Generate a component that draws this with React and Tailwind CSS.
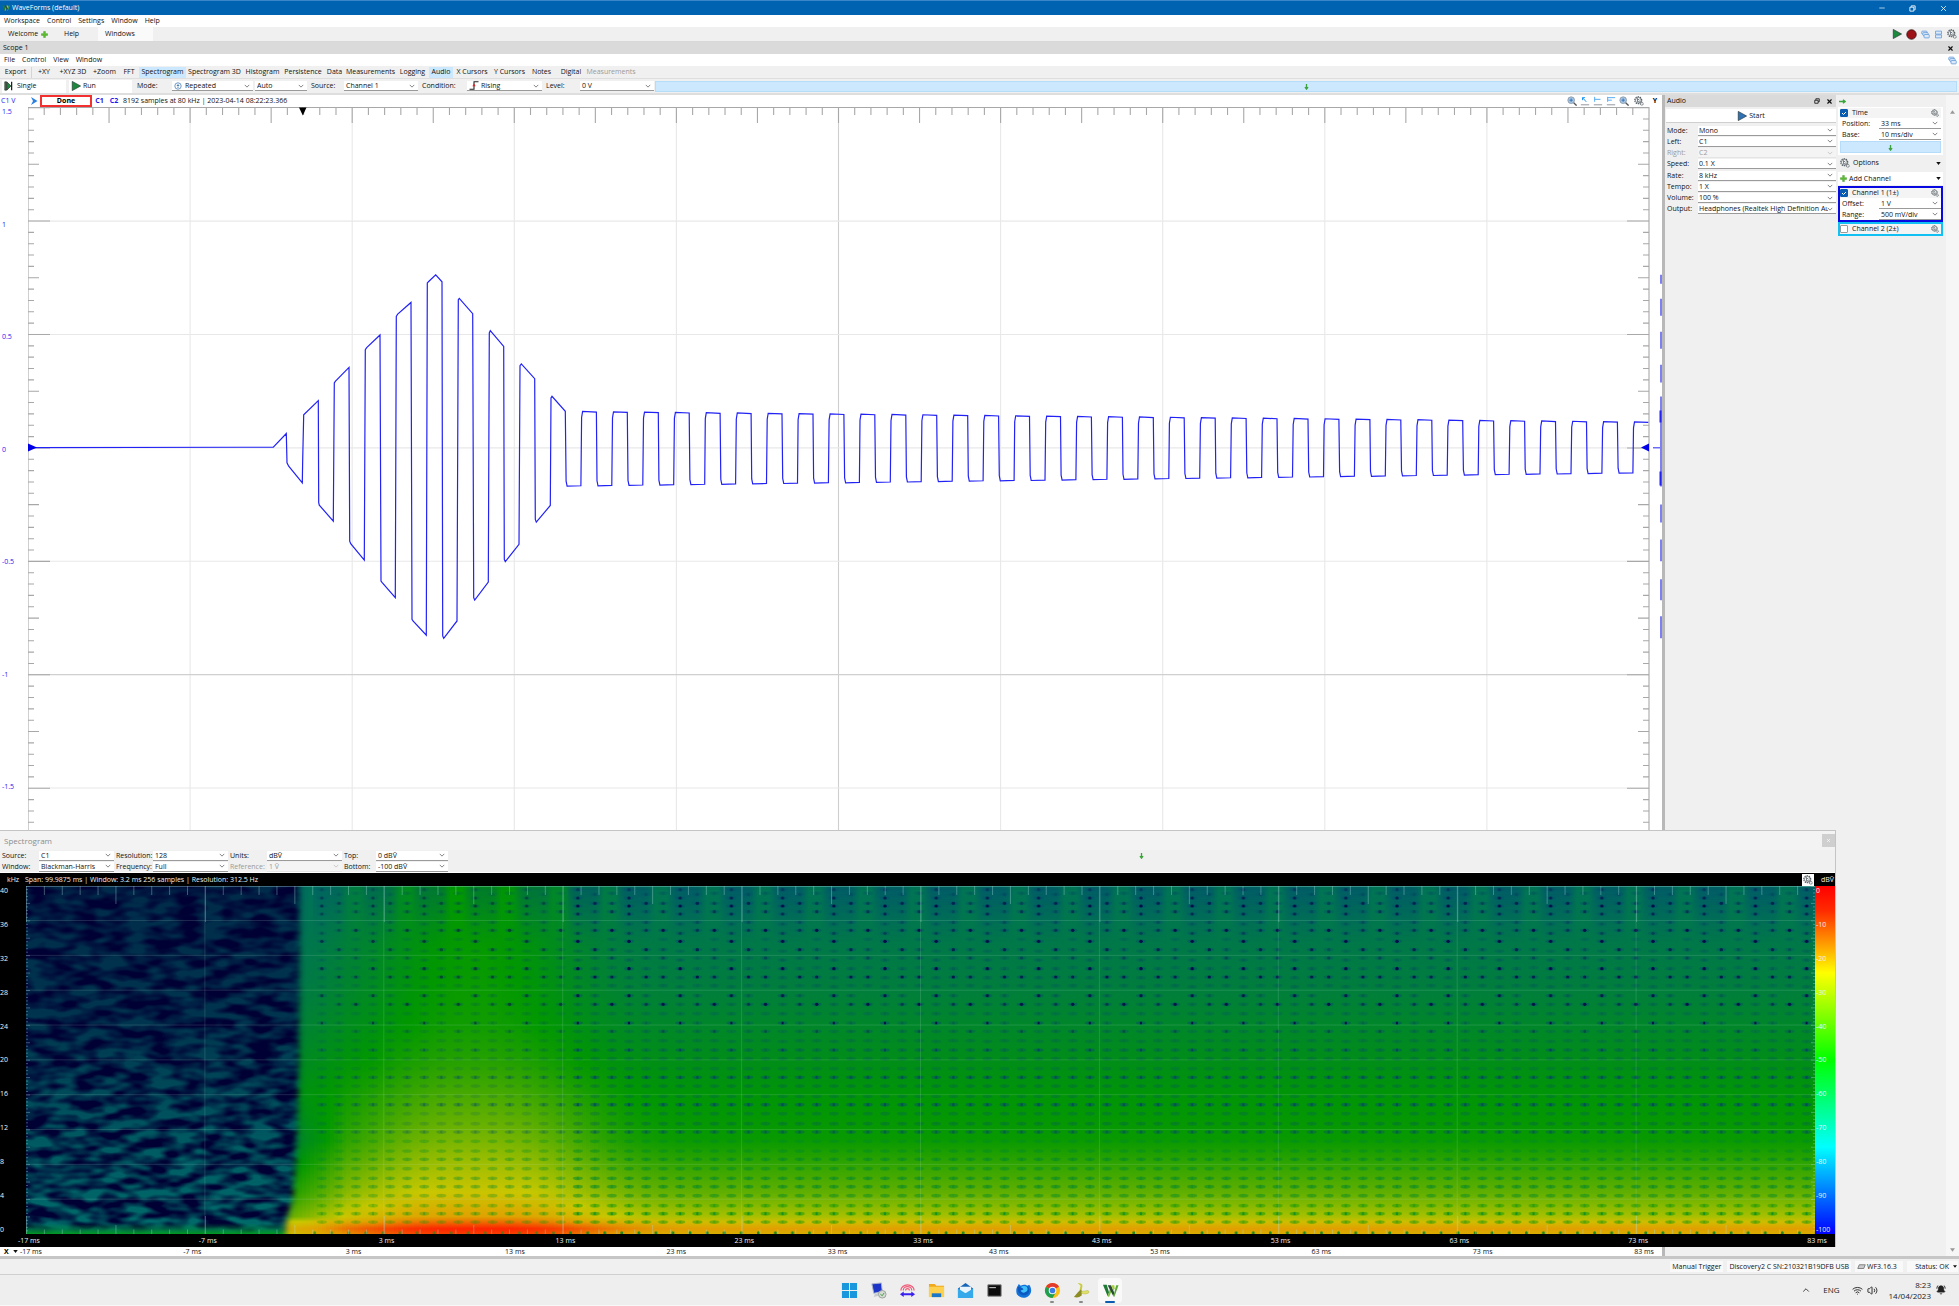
import { useId } from "react";
import { Minus, X, ChevronUp, Wifi, Volume2, BellRing } from "lucide-react";

const waveHead = [
  [0, 563], [100, 563], [139, 522], [141, 610], [146, 620], [187, 670], [188, 600], [191, 466],
  [235, 423], [236, 730], [238, 737], [280, 785], [283, 370], [286, 365], [327, 323], [329, 845],
  [332, 853], [373, 902], [376, 270], [380, 264], [420, 226], [423, 965], [426, 969], [466, 1015],
  [469, 170], [473, 163], [513, 128], [516, 1080], [519, 1085], [559, 1128], [562, 70], [566, 65],
  [587, 45], [606, 66], [608, 1130], [611, 1137], [651, 1085], [655, 120], [658, 116], [698, 162],
  [701, 1015], [704, 1022], [745, 968], [748, 220], [751, 213], [791, 260], [793, 900], [796, 907],
  [837, 855], [840, 318], [844, 313], [884, 357], [886, 780], [889, 788], [931, 738], [933, 415],
  [936, 410], [976, 455],
];

const buildWave = () => {
  const pts = [[28, 448], ...waveHead.map(([x, y]) => [240 + x / 3, 260 + y / 3])];
  for (let k = 0; k < 70; k++) {
    const x = 565.7 + k * 15.47;
    const f = k / 69;
    const low = k % 2 === 0;
    const y = low ? 486.7 - 13.2 * f : 411.7 + 10.6 * f;
    const end = Math.min(x + 15.2, 1649);
    pts.push([x + 0.4, low ? y - 5 : y + 6]);
    pts.push([x + 1.4, y]);
    pts.push([end, low ? y - 0.4 : y + 0.6]);
  }
  return pts.map(([x, y]) => `${x.toFixed(1)},${y.toFixed(1)}`).join(" ");
};

const lerpTable = (xs, ys, x) => {
  if (x <= xs[0]) return ys[0];
  for (let i = 1; i < xs.length; i++) {
    if (x <= xs[i]) {
      const f = (x - xs[i - 1]) / (xs[i] - xs[i - 1]);
      return ys[i - 1] + f * (ys[i] - ys[i - 1]);
    }
  }
  return ys[ys.length - 1];
};

const levelColor = (t) => {
  const stops = [0, 0.15, 0.35, 0.5, 0.75, 0.86, 1];
  const r = lerpTable(stops, [0, 0, 0, 0, 200, 226, 255], t);
  const g = lerpTable(stops, [0, 48, 106, 152, 200, 158, 24], t);
  const b = lerpTable(stops, [51, 80, 106, 0, 0, 0, 0], t);
  return `rgb(${Math.round(r)},${Math.round(g)},${Math.round(b)})`;
};

const depths = [0, 0.27, 0.4, 0.5, 0.6, 0.73, 0.8, 0.88, 0.92, 0.95, 0.965, 0.985, 1];
const steady = [0.38, 0.41, 0.44, 0.465, 0.49, 0.51, 0.56, 0.62, 0.67, 0.71, 0.78, 0.86, 0.82];
const burst = [0.12, 0.1, 0.08, 0.08, 0.1, 0.14, 0.14, 0.14, 0.14, 0.14, 0.13, 0.13, 0.14];

const columnStops = (x) => {
  const edge = Math.max(0, Math.min(1, (345 - x) / 50));
  return depths.map((v, i) => {
    const b = Math.exp(-((Math.abs(x - 473) / (98 + 32 * v)) ** (2 + v)));
    const drop = v > 0.96 ? 0.04 : v > 0.6 ? 0.08 : 0.02;
    return { v, color: levelColor(steady[i] + burst[i] * b - edge * drop) };
  });
};

const strips = Array.from({ length: 108 }, (_, i) => 270 + i * 4);

// [y, strength] of the nulls in each of the three repeating columns
const lowerNulls = [
  [539, 0.25], [569, 0.15], [595, 0.85], [621, 0.25], [652, 0.2], [677, 0.85], [704, 0.2],
  [734, 0.25], [759, 0.65], [787, 0.3], [816, 0.35], [841, 0.6], [869, 0.4], [898, 0.6],
  [923, 0.6], [950, 0.35], [980, 0.6], [1004, 0.8], [1029, 0.5],
];
const nullColumns = [
  { x: 8.5, rows: [[43, 0.3], [73, 0.6], [98, 0.7], [154, 0.95], [181, 0.2], [212, 0.5], [237, 0.6], [266, 0.2], [294, 0.85], [320, 0.25], [376, 0.95], [404, 0.2], [457, 0.6], [485, 0.2], [513, 0.5]] },
  { x: 25.6, rows: [[32, 0.6], [57, 0.85], [81, 1], [105, 0.8], [135, 0.4], [163, 0.6], [187, 1], [216, 0.25], [243, 0.35], [269, 1], [296, 0.3], [323, 0.25], [350, 0.9], [376, 0.3], [404, 0.3], [432, 0.95], [457, 0.2], [487, 0.2], [513, 0.9]] },
  { x: 42.7, rows: [[46, 0.4], [73, 0.85], [98, 0.5], [130, 0.5], [154, 0.7], [212, 0.85], [237, 0.3], [269, 0.35], [294, 0.9], [320, 0.2], [350, 0.4], [376, 0.7], [404, 0.2], [432, 0.4], [457, 0.35], [485, 0.2], [513, 0.5]] },
];

const Gear = ({ size = 10 }) => (
  <svg width={size} height={size} viewBox="0 0 20 20" fill="none" stroke="#4f585d">
    <circle cx="8.500" cy="8.500" r="7" strokeWidth="2.200" strokeDasharray="2.800 1.600" />
    <circle cx="8.500" cy="8.500" r="5.700" strokeWidth="1.300" fill="#f2f4f5" />
    <path d="M7 5v6.500h4.500M7 5.500l4 3" strokeWidth="1.500" />
    <circle cx="15.500" cy="15.500" r="3" strokeWidth="2" strokeDasharray="1.800 1" fill="#e5e8ea" />
  </svg>
);

const Caret = ({ faded }) => (
  <svg
    viewBox="0 0 8 5"
    className="pointer-events-none absolute right-[3px] top-1/2 h-[4px] w-[6px] -translate-y-1/2"
    fill="none"
    stroke={faded ? "#c4c4c4" : "#777"}
  >
    <path d="M1 1l3 3 3-3" strokeWidth="1.2" />
  </svg>
);

const Pick = ({ label, value, className = "", pad = "pl-[2px]", disabled = false, icon = null }) => (
  <div
    className={`relative h-[10px] min-w-0 border-b ${disabled ? "border-[#e4e4e4] bg-[#f4f4f4]" : "border-[#9a9a9a] bg-white"} ${className}`}
  >
    {icon && <span className="pointer-events-none absolute inset-y-0 left-[2px] flex items-center">{icon}</span>}
    <select
      aria-label={label}
      disabled={disabled}
      defaultValue={value}
      className={`block h-[9px] w-full appearance-none bg-transparent pr-2 leading-[9px] ${pad} ${disabled ? "text-[#9a9a9a] opacity-100" : "text-[#111]"}`}
    >
      <option>{value}</option>
    </select>
    <Caret faded={disabled} />
  </div>
);

const PlayIcon = ({ color = "#1c8a3c", size = 10 }) => (
  <svg width={size} height={size} viewBox="0 0 12 12">
    <path d="M1.500 0.500L11.500 6l-10 5.500z" fill={color} stroke="#233" strokeWidth="0.8" />
  </svg>
);

const WindowsIcon = ({ tiled }) => (
  <svg width="9" height="9" viewBox="0 0 12 12" fill="#dce9f8" stroke="#5c97d8" strokeWidth="1">
    {tiled ? (
      <path d="M2 1.5h8v4H2zM2 6.5h8v4H2z" />
    ) : (
      <>
        <rect x="1" y="1.5" width="7" height="4" rx="1" />
        <rect x="2.5" y="3.5" width="7" height="4" rx="1" />
        <rect x="4" y="6" width="7" height="4.500" rx="1" />
      </>
    )}
  </svg>
);

const GreenArrow = ({ right }) => (
  <svg width="7" height="7" viewBox="0 0 8 8" fill="none" stroke="#3ba53b" strokeWidth="1.5">
    {right ? <path d="M0 4h7M4.500 2L7 4 4.500 6" /> : <path d="M4 1v6M2.200 4.800L4 7l1.800-2.200" />}
  </svg>
);

const Plus = () => (
  <svg width="7" height="7" viewBox="0 0 8 8">
    <path d="M3 0.500h2V3h2.500v2H5v2.500H3V5H0.500V3H3z" fill="#5cc02e" stroke="#3f8f22" strokeWidth="0.5" />
  </svg>
);

const WLogo = ({ size }) => (
  <svg width={size} height={size} viewBox="0 0 18 18">
    <path d="M1 3h4l2.500 8L6 15z" fill="#1f7a35" />
    <path d="M6 15L8.500 7l2 2L7.500 16z" fill="#7cc142" />
    <path d="M6 3.500h3.500l3.500 8-1 3.500z" fill="#2a4b38" />
    <path d="M12 15L15 3.500h2.500L13 16z" fill="#59a838" />
    <path d="M10 3.500h3l.5 3.500-1.500 2.500z" fill="#a5cf3d" />
  </svg>
);

const MenuBar = ({ items }) => (
  <nav className="flex h-[12px] items-center gap-[7px] bg-white pl-1">
    {items.map((item) => (
      <button key={item}>{item}</button>
    ))}
  </nav>
);

const views = [
  ["Export", "w-[31px]"],
  ["+XY", "w-[25px] border-l border-[#d5d5d5]"],
  ["+XYZ 3D", "w-[34px]"],
  ["+Zoom", "w-[29px]"],
  ["FFT", "w-[20px]"],
  ["Spectrogram", "w-[47px] bg-[#cce8ff]"],
  ["Spectrogram 3D", "w-[57px]"],
  ["Histogram", "w-[39px]"],
  ["Persistence", "w-[42px]"],
  ["Data", "w-[21px]"],
  ["Measurements", "w-[51px]"],
  ["Logging", "w-[33px]"],
  ["Audio", "w-[24px] bg-[#cce8ff]"],
  ["X Cursors", "w-[38px]"],
  ["Y Cursors", "w-[37px]"],
  ["Notes", "w-[27px]"],
  ["Digital", "w-[32px]"],
  ["Measurements", "w-[48px] text-[#9a9a9a]"],
];

const Toolbar = () => (
  <div className="flex h-[14px] items-center bg-[#f0f0f0] pl-[2px]">
    <button className="flex h-[13px] w-[64px] items-center gap-1 bg-white pl-[2px]">
      <svg width="9" height="10" viewBox="0 0 10 12">
        <path d="M0.500 1h2v10h-2zM3 1l5 5-5 5z" fill="#1c8a3c" stroke="#222" strokeWidth="0.7" />
        <path d="M8 1h1.500v10H8z" fill="#222" />
      </svg>
      Single
    </button>
    <button className="ml-[3px] flex h-[13px] w-[63px] items-center gap-[2px] bg-white pl-[2px]">
      <PlayIcon />
      Run
    </button>
    <span className="w-[40px] pl-[5px]">Mode:</span>
    <Pick
      label="Mode"
      value="Repeated"
      className="w-[81px]"
      pad="pl-[13px]"
      icon={
        <svg width="8" height="8" viewBox="0 0 10 10" fill="none" stroke="#4a7fb5">
          <circle cx="5" cy="5" r="4" />
          <path d="M5 2.500L7 5H3zM5 7.500L3.500 6h3z" fill="#4a7fb5" stroke="none" />
        </svg>
      }
    />
    <Pick label="Auto" value="Auto" className="ml-[2px] w-[52px]" />
    <span className="w-[37px] pl-[4px]">Source:</span>
    <Pick label="Source" value="Channel 1" className="w-[74px]" />
    <span className="w-[49px] pl-[4px]">Condition:</span>
    <Pick
      label="Condition"
      value="Rising"
      className="w-[75px]"
      pad="pl-[14px]"
      icon={
        <svg width="10" height="9" viewBox="0 0 12 11" fill="none">
          <path d="M0.500 10h5.500V1h5.500" stroke="#222" strokeWidth="1.300" />
          <path d="M6 3L4 6.500h4z" fill="#e02020" />
        </svg>
      }
    />
    <span className="w-[38px] pl-[4px]">Level:</span>
    <Pick label="Level" value="0 V" className="w-[74px]" />
    <button
      aria-label="Trigger level"
      className="ml-[1px] mr-[2px] flex h-[11px] flex-1 items-center justify-center border border-[#b5dcf8] bg-[#cce8ff]"
    >
      <GreenArrow />
    </button>
  </div>
);

const hTicks = Array.from({ length: 99 }, (_, i) => i + 1);
const vTicks = Array.from({ length: 64 }, (_, i) => i);

const ScopePlot = () => (
  <svg viewBox="28 107 1634 724" preserveAspectRatio="none" className="h-full min-w-0 flex-1" fill="none">
    <g strokeWidth="1.1">
      {[1, 2, 3, 4, 5, 6, 7, 8, 9].map((i) => (
        <path key={i} d={`M${28 + i * 162.1} 107V831`} stroke={i === 5 ? "#cfcfcf" : "#e8e8e8"} />
      ))}
      {[221.3, 334.8, 448.3, 561.9, 675.4, 789].map((y) => (
        <path key={y} d={`M28 ${y}H1649`} stroke={y === 675.4 ? "#d0d0d0" : "#e8e8e8"} />
      ))}
    </g>
    <g stroke="#a8a8a8" strokeWidth="1.1">
      {hTicks.map((i) => (
        <path key={i} d={`M${28 + i * 16.21} 107v${i % 5 === 0 ? 16 : 8}`} />
      ))}
      {vTicks.map((i) => {
        const y = 107.6 + i * 11.36;
        const len = i % 10 === 0 ? 22 : i % 5 === 0 ? 11 : 6;
        return <path key={i} d={`M28 ${y}h${len}M1649 ${y}h${-len}`} />;
      })}
      <path d="M28 831V107.500H1649V831" />
    </g>
    <path d="M299 107.500h7.500l-3.700 8z" fill="#000" />
    <polyline points={buildWave()} stroke="#2222f4" strokeWidth="1.2" />
    <path d="M28 444l9 4-9 4zM1649 444l-8 4 8 4z" fill="#0000e8" />
    <path d="M1653 448.300h7" stroke="#2222f4" />
    <path
      d="M1661 275v9M1661 299v17M1661 332v17M1661 365v18M1661 397v55M1661 452v35M1661 505v18M1661 540v22M1661 580v21M1661 617v22"
      stroke="#7f7ff5"
      strokeWidth="2"
    />
    <path d="M1660.500 411v12M1660.500 472v14" stroke="#2222f4" strokeWidth="2" />
  </svg>
);

const ScopeTools = () => (
  <div className="ml-auto flex items-center gap-[3px] pr-[3px]">
    {[0, 1, 2, 3, 4].map((i) => (
      <button key={i} aria-label={`View tool ${i + 1}`}>
        <svg width="10" height="10" viewBox="0 0 12 12" fill="none">
          {i === 0 || i === 4 ? (
            <>
              <circle cx="5" cy="5" r="4" fill="#a5c6e8" stroke="#8a97a3" />
              <path d="M8 8l3.500 3.500" stroke="#555" strokeWidth="1.600" />
              <path d="M3 5h4M5 3v4" stroke="#2b6cb0" />
            </>
          ) : (
            <>
              <path d="M1 10.500h10" stroke="#a8adb2" strokeWidth="1.500" />
              {i === 1 && <path d="M7.500 7L3 2M3 5V2h3" stroke="#2196f3" strokeWidth="1.200" />}
              {i === 2 && <path d="M2 1v6M2 4h7" stroke="#58aef5" strokeWidth="1.200" />}
              {i === 3 && <path d="M2 1v6M2 2h9M2 5h5" stroke="#58aef5" strokeWidth="1.200" />}
            </>
          )}
        </svg>
      </button>
    ))}
    <button aria-label="Scope settings" className="ml-[2px]">
      <Gear />
    </button>
    <button className="ml-1 w-[8px] text-center font-bold text-black">Y</button>
  </div>
);

const Scope = () => (
  <section className="flex min-w-0 flex-1 flex-col bg-white">
    <div className="flex h-[12px] items-center">
      <span className="w-[29px] pl-[1px] text-[#2222f4]">C1 V</span>
      <svg width="8" height="8" viewBox="0 0 8 8" className="ml-[1px]">
        <path d="M1 0L7.500 4 1 8 3 4z" fill="#2b7fe0" />
      </svg>
      <span className="ml-[2px] flex h-[12px] w-[52px] items-center justify-center border-2 border-[#f23030] font-bold text-black">
        Done
      </span>
      <button className="w-[15px] text-center font-bold text-[#1a1aee]">C1</button>
      <button className="w-[14px] text-center font-bold text-[#1a1aee]">C2</button>
      <span className="pl-[2px]">8192 samples at 80 kHz | 2023-04-14 08:22:23.366</span>
      <ScopeTools />
    </div>
    <div className="flex min-h-0 flex-1">
      <div className="grid w-[28px] grid-rows-[1127fr_1127fr_1127fr_1127fr_1127fr_1127fr_478fr] pl-[2px] text-[#2222f4]">
        {["1.5", "1", "0.5", "0", "-0.5", "-1", "-1.5"].map((v) => (
          <span key={v} className="leading-[10px]">{v}</span>
        ))}
      </div>
      <ScopePlot />
    </div>
  </section>
);

const audioRows = [
  ["Mode:", "Mono"],
  ["Left:", "C1"],
  ["Right:", "C2"],
  ["Speed:", "0.1 X"],
  ["Rate:", "8 kHz"],
  ["Tempo:", "1 X"],
  ["Volume:", "100 %"],
  ["Output:", "Headphones (Realtek High Definition Au"],
];

const AudioPanel = () => (
  <section className="w-[171px] bg-[#f0f0f0]">
    <header className="flex h-[12px] items-center bg-[#dadada] pl-[2px] pr-[3px]">
      <span className="flex-1">Audio</span>
      <button aria-label="Undock">
        <svg width="6" height="6" viewBox="0 0 8 8" fill="none" stroke="#222" strokeWidth="1.200">
          <path d="M2.500 3V1H7v4H5.500M1 3h4.500v4H1z" />
        </svg>
      </button>
      <button aria-label="Close audio" className="ml-[6px]">
        <X size={7} strokeWidth={4} />
      </button>
    </header>
    <button className="mx-[1px] mt-[2px] flex h-[14px] w-[170px] items-center justify-center gap-[2px] border-b border-[#cfcfcf] bg-white">
      <PlayIcon color="#2f72b8" />
      Start
    </button>
    <div className="mt-[2px] grid h-[90px] grid-rows-8">
      {audioRows.map(([name, value]) => (
        <label key={name} className="flex items-center pl-[2px]">
          <span className={`w-[31px] ${name === "Right:" ? "text-[#9a9a9a]" : ""}`}>{name}</span>
          <Pick label={name} value={value} disabled={name === "Right:"} className="flex-1" pad="pl-[1px]" />
        </label>
      ))}
    </div>
  </section>
);

const Field = ({ name, value }) => (
  <label className="flex h-[11px] items-center">
    <span className="w-[39px] pl-[2px]">{name}</span>
    <Pick label={name} value={value} className="flex-1" />
  </label>
);

const CheckRow = ({ label, checked }) => (
  <div className="flex h-[10px] items-center gap-1 bg-[#f4f4f4] pr-[2px]">
    <label className="flex flex-1 items-center gap-1">
      <span className="relative h-[8px] w-[8px]">
        <input
          type="checkbox"
          defaultChecked={checked}
          className="block h-[8px] w-[8px] appearance-none rounded-[1px] border border-[#999] bg-white checked:border-[#0a5cb0] checked:bg-[#0a5cb0]"
        />
        {checked && (
          <svg viewBox="0 0 8 8" className="pointer-events-none absolute inset-0" fill="none" stroke="#fff">
            <path d="M2 4l1.500 1.500L6 3" />
          </svg>
        )}
      </span>
      {label}
    </label>
    <button aria-label={`${label} settings`}>
      <Gear size={8} />
    </button>
  </div>
);

const SidePanel = () => (
  <aside className="flex w-[123px] bg-[#f0f0f0]">
    <div className="w-[107px] pl-[2px]">
      <div className="flex h-[12px] items-center pl-[1px]">
        <GreenArrow right />
      </div>
      <div className="bg-white px-[2px] pb-[2px] pt-[1px]">
        <CheckRow label="Time" checked />
        <Field name="Position:" value="33 ms" />
        <Field name="Base:" value="10 ms/div" />
        <button
          aria-label="Time more"
          className="mt-[1px] flex h-[12px] w-full items-center justify-center border border-[#b5dcf8] bg-[#cce8ff]"
        >
          <GreenArrow />
        </button>
      </div>
      <button className="mt-[1px] flex h-[14px] w-full items-center gap-[3px] pl-[2px] pr-[2px]">
        <Gear />
        <span className="flex-1 text-left">Options</span>
        <svg width="5" height="3" viewBox="0 0 6 4"><path d="M0 0h6L3 4z" fill="#111" /></svg>
      </button>
      <button className="mt-[2px] flex h-[13px] w-full items-center gap-[2px] bg-white pl-[2px] pr-[2px]">
        <Plus />
        <span className="flex-1 text-left">Add Channel</span>
        <svg width="5" height="3" viewBox="0 0 6 4"><path d="M0 0h6L3 4z" fill="#111" /></svg>
      </button>
      <div className="mt-[1px] border-2 border-[#0808e0] bg-white">
        <CheckRow label="Channel 1 (1±)" checked />
        <Field name="Offset:" value="1 V" />
        <Field name="Range:" value="500 mV/div" />
      </div>
      <div className="border-2 border-[#12c0f4]">
        <CheckRow label="Channel 2 (2±)" />
      </div>
    </div>
    <div className="ml-auto flex w-[13px] flex-col items-center justify-between bg-[#f6f6f6] pb-1 pt-[15px]">
      <svg width="5" height="4" viewBox="0 0 6 4"><path d="M3 0l3 4H0z" fill="#999" /></svg>
      <svg width="5" height="4" viewBox="0 0 6 4"><path d="M0 0h6L3 4z" fill="#999" /></svg>
    </div>
  </aside>
);

const spectrumFields = [
  ["Source:", "C1", "w-[37px]", "w-[75px]"],
  ["Resolution:", "128", "w-[37px]", "w-[75px]"],
  ["Units:", "dBṼ", "w-[37px]", "w-[75px]"],
  ["Top:", "0 dBṼ", "w-[32px]", "w-[72px]"],
  ["Window:", "Blackman-Harris", "w-[37px]", "w-[75px]"],
  ["Frequency:", "Full", "w-[37px]", "w-[75px]"],
  ["Reference:", "1 Ṽ", "w-[37px]", "w-[75px]"],
  ["Bottom:", "-100 dBṼ", "w-[32px]", "w-[72px]"],
];

const SpectrumPlot = () => {
  const id = useId();
  const ticks = Array.from({ length: 100 }, (_, i) => i);
  return (
    <svg viewBox="26 887 1789 348" preserveAspectRatio="none" className="h-full min-w-0 flex-1">
      <defs>
        {strips.map((x) => (
          <linearGradient key={x} id={`${id}s${x}`} x1="0" y1="0" x2="0" y2="1">
            {columnStops(x).map((s) => (
              <stop key={s.v} offset={s.v} stopColor={s.color} />
            ))}
          </linearGradient>
        ))}
        <linearGradient id={`${id}steady`} x1="0" y1="0" x2="0" y2="1">
          {columnStops(1200).map((s) => (
            <stop key={s.v} offset={s.v} stopColor={s.color} />
          ))}
        </linearGradient>
        <linearGradient id={`${id}fade`} x1="0" y1="0" x2="0" y2="1">
          <stop offset="0" stopColor="#fff" stopOpacity="0.4" />
          <stop offset="0.4" stopColor="#fff" stopOpacity="0.5" />
          <stop offset="0.75" stopColor="#fff" stopOpacity="0.85" />
          <stop offset="1" stopColor="#fff" stopOpacity="1" />
        </linearGradient>
        <linearGradient id={`${id}floor`} x1="0" y1="0" x2="0" y2="1">
          <stop offset="0" stopColor="#008a3a" stopOpacity="0" />
          <stop offset="0.6" stopColor="#008a3a" stopOpacity="0.6" />
          <stop offset="1" stopColor="#009a20" />
        </linearGradient>
        <linearGradient id={`${id}smudge`} x1="0" y1="0" x2="0" y2="1">
          <stop offset="0" stopColor="#004a72" stopOpacity="0.6" />
          <stop offset="1" stopColor="#005a6a" stopOpacity="0" />
        </linearGradient>
        <filter id={`${id}soft`} x="-10%" y="-10%" width="120%" height="120%">
          <feGaussianBlur stdDeviation="3 2" />
        </filter>
        <filter id={`${id}dot`}>
          <feGaussianBlur stdDeviation="0.7 0.5" />
        </filter>
        <filter id={`${id}noise`} x="0" y="0" width="100%" height="100%" colorInterpolationFilters="sRGB">
          <feTurbulence type="fractalNoise" baseFrequency="0.04 0.1" numOctaves="2" seed="11" />
          <feColorMatrix values="0 0 0 0 0  0 0 0 0 0.42  0 0 0 0 0.42  2.9 0 0 0 -0.95" />
        </filter>
        <mask id={`${id}shade`} maskUnits="userSpaceOnUse" x="26" y="887" width="300" height="348">
          <rect x="26" y="887" width="300" height="348" fill={`url(#${id}fade)`} />
        </mask>
        <mask id={`${id}quiet`} maskUnits="userSpaceOnUse" x="0" y="860" width="340" height="400">
          <path d="M0 800H300L299 1080 296 1160 293 1200 286 1225 284 1300H0z" fill="#fff" filter={`url(#${id}soft)`} />
        </mask>
        <pattern id={`${id}nulls`} patternUnits="userSpaceOnUse" x="705.8" y="880" width="51.2" height="370">
          <rect x="16" y="7" width="32" height="60" fill={`url(#${id}smudge)`} filter={`url(#${id}soft)`} />
          <g filter={`url(#${id}dot)`}>
            {nullColumns.map((col) =>
              [...col.rows, ...lowerNulls].map(([y, s]) => {
                const deep = y > 775;
                const fill = deep ? (y > 970 ? "#1d9e00" : "#008a28") : "#00506a";
                return (
                  <g key={`${col.x}-${y}`}>
                    <ellipse cx={col.x} cy={y / 3} rx="5" ry="1.8" fill={fill} opacity={deep ? 0.35 + s * 0.3 : 0.18 + s * 0.35} />
                    <ellipse
                      cx={col.x}
                      cy={y / 3}
                      rx={y > 400 ? 1.2 : 1.7}
                      ry="1.6"
                      fill={deep ? "#00803a" : y > 500 ? "#00405c" : "#000a46"}
                      opacity={s * s}
                    />
                  </g>
                );
              })
            )}
            {[1.3, 18.4, 35.5].map((x) => (
              <ellipse key={x} cx={x} cy="354" rx="1.5" ry="1.8" fill="#1a8a20" />
            ))}
          </g>
        </pattern>
      </defs>
      <rect x="700" y="887" width="1115" height="348" fill={`url(#${id}steady)`} />
      {strips.map((x) => (
        <rect key={x} x={x} y="887" width="4.5" height="348" fill={`url(#${id}s${x})`} />
      ))}
      <rect x="313" y="887" width="255" height="348" fill={`url(#${id}nulls)`} opacity="0.65" />
      <rect x="568" y="887" width="1247" height="348" fill={`url(#${id}nulls)`} />
      <g mask={`url(#${id}quiet)`}>
        <rect x="26" y="887" width="300" height="348" fill="#000034" />
        <g mask={`url(#${id}shade)`}>
          <rect x="26" y="887" width="300" height="348" filter={`url(#${id}noise)`} />
        </g>
        <rect x="26" y="1224" width="300" height="11" fill={`url(#${id}floor)`} />
      </g>
      <g stroke="#b8e8d8" strokeOpacity="0.16">
        {[1, 2, 3, 4, 5, 6, 7, 8, 9].map((i) => (
          <path key={i} d={`M26 ${886.7 + i * 34.83}H1815M${26 + i * 178.9} 887V1235`} />
        ))}
      </g>
      <g stroke="#a8e0e0" strokeOpacity="0.36">
        {ticks.map((i) => {
          const len = i % 10 === 0 ? 36 : i % 5 === 0 ? 18 : 9;
          return <path key={i} d={`M${26.5 + i * 17.89} 887v${len}M${26.5 + i * 17.89} 1235v${-len / 2}`} />;
        })}
        {ticks.map((i) => (
          <path key={i} d={`M26 ${887 + i * 3.483}h${i % 5 === 0 ? 4 : 2}M1815 ${887 + i * 3.483}h${i % 5 === 0 ? -4 : -2}`} />
        ))}
        <path d="M26 887.500H1815" />
      </g>
    </svg>
  );
};

const times = ["-17 ms", "-7 ms", "3 ms", "13 ms", "23 ms", "33 ms", "43 ms", "53 ms", "63 ms", "73 ms", "83 ms"];

const TimeAxis = ({ className = "" }) => (
  <div className={`flex min-w-0 flex-1 justify-between ${className}`}>
    {times.map((t) => (
      <span key={t} className="flex w-0 justify-center whitespace-nowrap">{t}</span>
    ))}
  </div>
);

const Spectrogram = () => (
  <section className="flex h-[417px] flex-col border-r border-t border-[#c4c4c4] bg-[#f0f0f0]">
    <header className="flex h-[19px] items-center justify-between bg-[#f3f3f3] pl-1 text-[8px] text-[#8c8c8c]">
      Spectrogram
      <button aria-label="Close spectrogram" className="flex h-[13px] w-[13px] items-center justify-center bg-[#cfcfcf] text-white">
        <X size={5} strokeWidth={3} />
      </button>
    </header>
    <div className="flex h-[23px] border-b border-white pl-[2px]">
      <div className="grid grid-cols-[repeat(4,max-content)] grid-rows-2 gap-x-[2px]">
        {spectrumFields.map(([name, value, labelWidth, width]) => (
          <label key={name} className="flex items-center">
            <span className={`${labelWidth} ${name === "Reference:" ? "text-[#9a9a9a]" : ""}`}>{name}</span>
            <Pick label={name} value={value} disabled={name === "Reference:"} className={width} />
          </label>
        ))}
      </div>
      <div className="flex flex-1 justify-center pt-[2px]">
        <GreenArrow />
      </div>
    </div>
    <div className="flex min-h-0 flex-1 flex-col bg-black text-[#f0f0f0]">
      <div className="flex h-[13px] items-center">
        <span className="w-[25px] pl-[7px]">kHz</span>
        <span className="flex-1">Span: 99.9875 ms | Window: 3.2 ms 256 samples | Resolution: 312.5 Hz</span>
        <button aria-label="Spectrogram settings" className="flex h-[12px] w-[12px] items-center justify-center bg-white">
          <Gear size={10} />
        </button>
        <span className="w-[21px] pl-[7px]">dBṼ</span>
      </div>
      <div className="flex min-h-0 flex-1">
        <div className="flex w-[26px] flex-col justify-between leading-[9px]">
          {[40, 36, 32, 28, 24, 20, 16, 12, 8, 4, 0].map((v) => (
            <span key={v}>{v}</span>
          ))}
        </div>
        <SpectrumPlot />
        <div className="flex w-[20px] flex-col justify-between bg-[linear-gradient(to_bottom,#ff0000,#ff2a00_7%,#ffff00_25%,#00ff00_50%,#00ffff_75%,#0000ff)] pl-[1px] leading-[9px]">
          {[0, -10, -20, -30, -40, -50, -60, -70, -80, -90, -100].map((v) => (
            <span key={v}>{v}</span>
          ))}
        </div>
      </div>
      <div className="flex h-[13px] items-center pl-[29px] pr-[18px]">
        <TimeAxis />
      </div>
    </div>
  </section>
);

const apps = {
  Start: <path d="M1 1h7.500v7.500H1zM9.500 1H17v7.500H9.500zM1 9.500h7.500V17H1zM9.500 9.500H17V17H9.500z" fill="#1a96dc" />,
  "Remote desktop": (
    <>
      <path d="M2 2l10-1 1 9-9 2z" fill="#1c35c8" stroke="#aab4c8" />
      <path d="M5 13l5-2 1 3-7 2z" fill="#c5c9d0" />
      <circle cx="13" cy="13" r="4" fill="#d7dcd5" stroke="#9aa09a" />
      <path d="M11 13l2 1.500 2-3" stroke="#3a9a3a" fill="none" />
    </>
  ),
  Antenna: (
    <>
      <path d="M2 9a7 6 0 0 1 14 0M4.500 9a4.500 4 0 0 1 9 0M7 9a2 2 0 0 1 4 0" stroke="#f05a78" fill="none" strokeWidth="1.300" />
      <path d="M1 13l4-3v2h8v-2l4 3-4 3v-2H5v2z" fill="#3a20f0" />
    </>
  ),
  Files: (
    <>
      <path d="M1 2h6l2 2h8v12H1z" fill="#f0a81c" />
      <path d="M1 5h16v11H1z" fill="#fdd04e" />
      <path d="M4 12h10v4H4z" fill="#1976c8" />
    </>
  ),
  Mail: (
    <>
      <path d="M1 7l8-6 8 6v10H1z" fill="#1565b8" />
      <path d="M3 5h12v7H3z" fill="#e9f4fc" />
      <path d="M1 7l8 5 8-5v10H1z" fill="#35a9ea" />
    </>
  ),
  Terminal: (
    <>
      <path d="M2 3h14v12H2z" fill="#0c0c0c" stroke="#777" />
      <path d="M3.500 6h7" stroke="#ddd" />
    </>
  ),
  Firefox: (
    <>
      <path d="M3 4l1-2 2 2c3-2 6-1 7 0l2-1c3 4 3 9-1 12-4 3-9 2-12-2-1-3-1-6 1-9z" fill="#1272d8" />
      <circle cx="9.500" cy="8.500" r="4.200" fill="#3fc0f8" />
      <path d="M3 5c3 0 5 1 6 3l-3 1c1 3 5 3 7 0 1-2 0-4-1-5 4 2 4 7 1 9-4 3-11 0-10-8z" fill="#0c58c0" />
    </>
  ),
  Chrome: (
    <>
      <circle cx="9" cy="9" r="8" fill="#fbc116" />
      <path d="M9 9L2.070 5A8 8 0 0 1 15.930 5z" fill="#e33b2e" />
      <path d="M9 9L2.070 5A8 8 0 0 0 9 17l3.500-6z" fill="#1fa050" />
      <circle cx="9" cy="9" r="4" fill="#fff" />
      <circle cx="9" cy="9" r="3" fill="#3b7de8" />
    </>
  ),
  Modeler: (
    <>
      <path d="M5 1c3 0 5 1 5 3l-1 6-2-2 1-4z" fill="#c9cc3e" />
      <path d="M8 8l-3 3-4 5c4 1 6 0 8-2l1-4z" fill="#8c8c22" />
      <path d="M9 10l7-1 1 2c-2 2-5 2-8 1z" fill="#dfe06a" stroke="#b2b43c" strokeWidth="0.500" />
    </>
  ),
};

const Taskbar = () => (
  <footer className="relative flex h-[32px] items-center justify-center gap-[5px] border-b border-t border-b-[#f8f8f8] border-t-[#cfcfcf] bg-[#eeeeee] text-[8px]">
    {Object.entries(apps).map(([name, art]) => (
      <button key={name} aria-label={name} className="relative flex h-[25px] w-[24px] items-center justify-center">
        <svg width="17" height="17" viewBox="0 0 18 18">{art}</svg>
        {(name === "Chrome" || name === "Modeler") && (
          <span className="absolute bottom-0 h-[2px] w-[4px] rounded-full bg-[#8a8a8a]" />
        )}
      </button>
    ))}
    <button aria-label="WaveForms" className="relative flex h-[25px] w-[24px] items-center justify-center rounded-sm bg-[#f9f9f9]">
      <WLogo size={17} />
      <span className="absolute bottom-0 h-[2px] w-[10px] rounded-full bg-[#0a5cb0]" />
    </button>
    <div className="absolute inset-y-0 right-[13px] flex items-center text-[#222]">
      <ChevronUp size={10} />
      <span className="ml-[12px]">ENG</span>
      <Wifi size={11} className="ml-[12px]" />
      <Volume2 size={11} className="ml-1" />
      <div className="ml-[11px] text-right leading-[11px]">
        <div>8:23</div>
        <div>14/04/2023</div>
      </div>
      <BellRing size={10} fill="#222" className="ml-[5px]" />
    </div>
  </footer>
);

const App = () => {
  return (
    <div className="flex h-screen min-h-[900px] flex-col overflow-hidden whitespace-nowrap bg-[#f0f0f0] font-['Open_Sans','Noto_Sans',sans-serif] text-[7px] leading-[10px] text-[#111]">
      <header className="flex h-[15px] items-center border-t border-[#3b86c8] bg-[#0063b1] pl-[2px] text-white">
        <WLogo size={8} />
        <span className="ml-[2px] flex-1">WaveForms (default)</span>
        <button aria-label="Minimize" className="w-[31px]"><Minus size={8} className="mx-auto" /></button>
        <button aria-label="Restore" className="w-[31px]">
          <svg width="7" height="7" viewBox="0 0 8 8" fill="none" stroke="#fff" className="mx-auto">
            <path d="M2.500 2V1H7v4.500H6M1 2.500h4.500V7H1z" />
          </svg>
        </button>
        <button aria-label="Close" className="w-[31px]"><X size={9} className="mx-auto" /></button>
      </header>
      <MenuBar items={["Workspace", "Control", "Settings", "Window", "Help"]} />
      <div className="flex h-[15px] items-center border-b border-[#d8d8d8] bg-[#f0f0f0]">
        <button className="flex w-[57px] items-center gap-[3px] pl-[8px]">
          Welcome <Plus />
        </button>
        <button className="w-[41px] pl-[7px] text-left">Help</button>
        <button className="flex h-full w-[55px] items-center bg-[#fafafa] pl-[7px]">Windows</button>
        <div className="ml-auto flex items-center gap-1 pr-[2px]">
          <button aria-label="Run all"><PlayIcon /></button>
          <button aria-label="Stop all">
            <svg width="11" height="11" viewBox="0 0 12 12">
              <circle cx="6" cy="6" r="5.200" fill="#9c1216" stroke="#2e1010" strokeWidth="0.800" />
            </svg>
          </button>
          <button aria-label="Cascade"><WindowsIcon /></button>
          <button aria-label="Tile"><WindowsIcon tiled /></button>
          <button aria-label="Settings"><Gear /></button>
        </div>
      </div>
      <div className="flex h-[12px] items-center justify-between bg-[#dadada] pl-[3px] pr-[5px]">
        Scope 1
        <button aria-label="Close scope"><X size={7} strokeWidth={4} /></button>
      </div>
      <div className="flex items-center bg-white pr-[2px]">
        <div className="flex-1"><MenuBar items={["File", "Control", "View", "Window"]} /></div>
        <button aria-label="Undock scope"><WindowsIcon /></button>
      </div>
      <div className="flex h-[13px] items-center border-b border-[#dedede] bg-[#f0f0f0]">
        {views.map(([name, style], i) => (
          <button key={i} className={`flex h-[11px] items-center justify-center ${style}`}>{name}</button>
        ))}
      </div>
      <Toolbar />
      <main className="flex min-h-0 flex-1 border-t-2 border-[#dedede]">
        <div className="flex min-w-0 flex-1 flex-col">
          <div className="flex min-h-0 flex-1">
            <Scope />
            <div className="w-[3px] bg-[#b8b8b8]" />
            <AudioPanel />
          </div>
          <Spectrogram />
          <div className="flex h-[9px] items-center leading-[9px]">
            <div className="flex min-w-0 flex-1 items-center bg-white">
              <div className="flex w-[31px] items-center gap-1 pl-1">
                <button className="font-bold text-black">X</button>
                <svg width="5" height="3" viewBox="0 0 6 4"><path d="M0 0h6L3 4z" fill="#111" /></svg>
              </div>
              <TimeAxis className="mr-[18px]" />
            </div>
            <div className="h-full w-[3px] bg-[#b8b8b8]" />
            <div className="w-[171px]" />
          </div>
        </div>
        <SidePanel />
      </main>
      <div className="h-[3px] bg-[#c6c6c6]" />
      <div className="flex h-[15px] items-center justify-end gap-1 pr-[1px]">
        <span className="flex h-[11px] items-center bg-[#f9f9f9] px-[2px]">Manual Trigger</span>
        <span className="flex h-[11px] items-center bg-[#f9f9f9] px-[2px]">Discovery2 C SN:210321B19DFB USB</span>
        <span className="flex h-[11px] w-[48px] items-center gap-[1px] bg-[#f9f9f9] pl-[2px]">
          <svg width="9" height="6" viewBox="0 0 12 8" fill="#ccc" stroke="#666">
            <path d="M3 1h8L9 6H1z" />
          </svg>
          WF3.16.3
        </span>
        <button className="flex h-[11px] w-[51px] items-center justify-end gap-1 bg-[#f9f9f9] pr-[1px]">
          Status: OK
          <svg width="4" height="3" viewBox="0 0 6 4"><path d="M0 0h6L3 4z" fill="#111" /></svg>
        </button>
      </div>
      <Taskbar />
    </div>
  );
};

export default App;
